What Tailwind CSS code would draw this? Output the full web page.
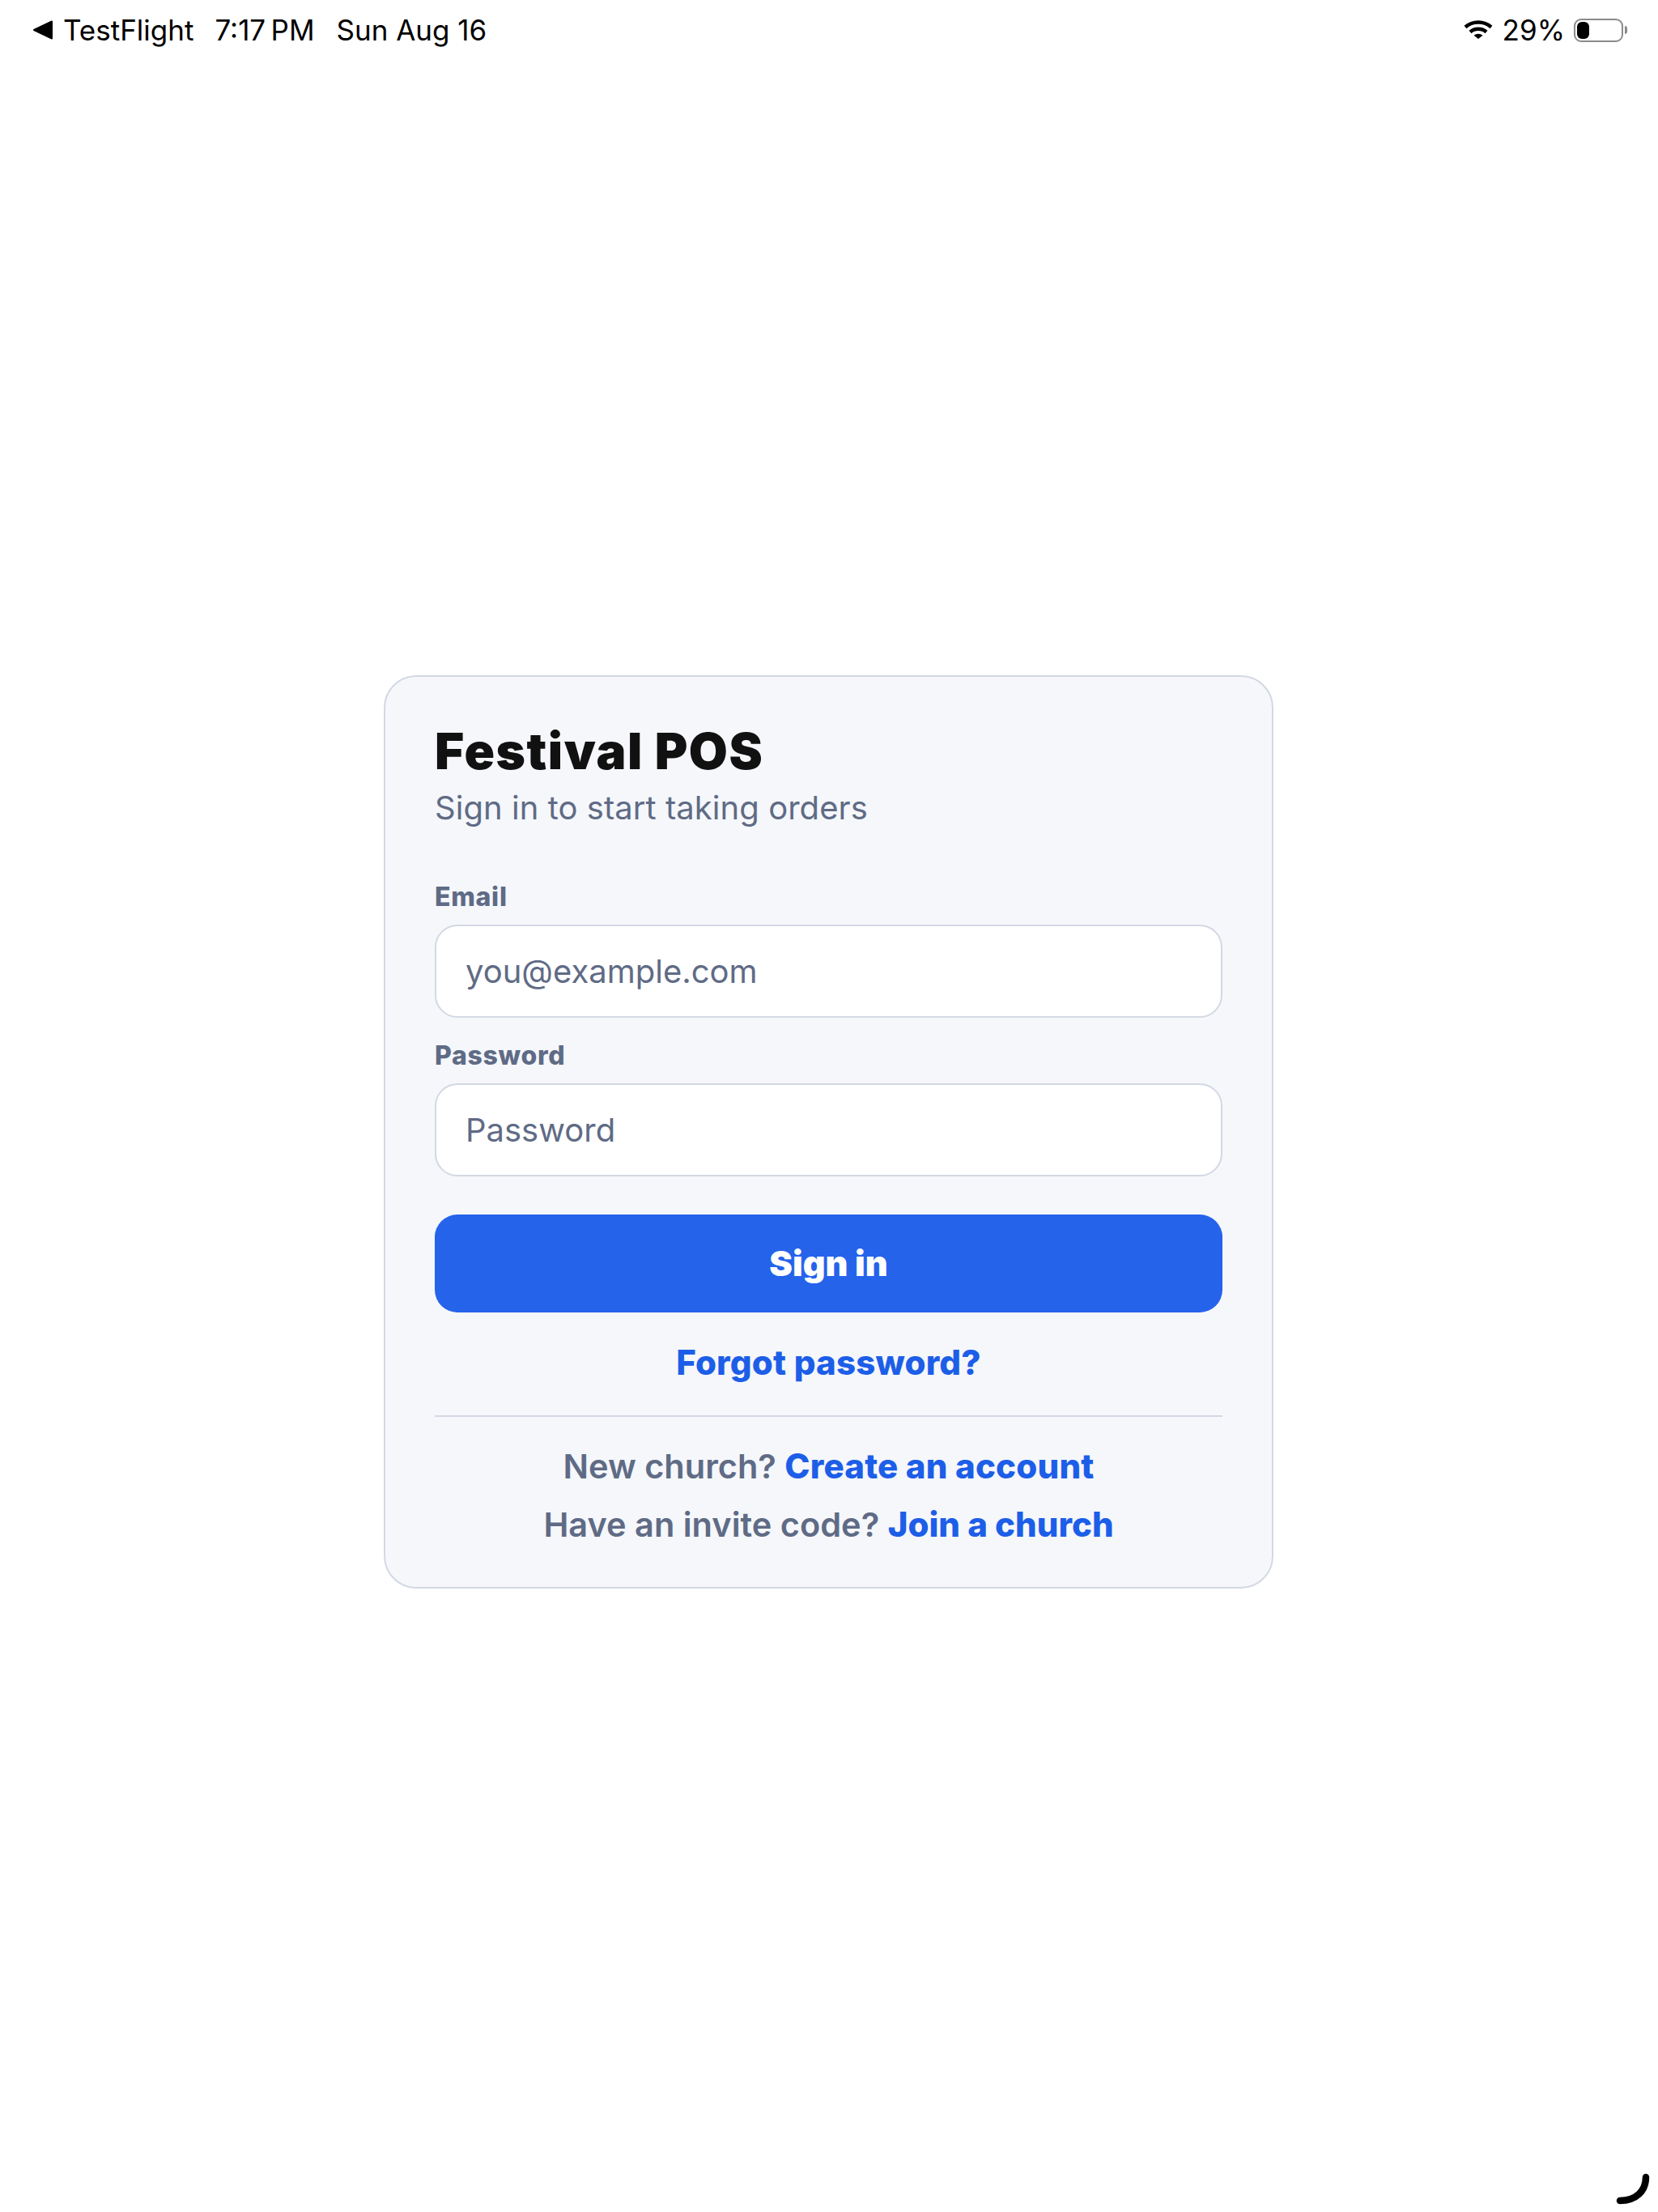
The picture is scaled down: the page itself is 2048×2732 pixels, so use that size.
<!DOCTYPE html>
<html lang="en">
<head>
  <meta charset="UTF-8">
  <title>Festival POS</title>
  <script src="https://cdn.jsdelivr.net/npm/@tailwindcss/browser@4"></script>
</head>
<body class="bg-white font-['Inter',sans-serif]">
  <div class="relative w-[2048px] h-[2732px] overflow-hidden">
    <!-- status bar -->
    <div class="flex items-center justify-between h-[74px] text-black text-[35px]">
      <div class="flex items-center pl-[41px]">
        <svg width="24" height="24" viewBox="0 0 24 24" class="mr-[13px]"><path d="M23 1.5 L23 22.5 L1 12 Z" fill="#000" stroke="#000" stroke-width="2" stroke-linejoin="round"/></svg>
        <span>TestFlight</span>
        <span class="ml-[26px]">7:17&#8201;PM</span>
        <span class="ml-[27px]">Sun Aug 16</span>
      </div>
      <div class="flex items-center pr-[38px]">
        <svg width="36" height="24" viewBox="0 0 36 24" fill="none" stroke="#000" stroke-width="4.4">
          <path d="M2 8.5 C11 0.5 25 0.5 34 8.5"/>
          <path d="M8 14.5 C13.5 9.5 22.5 9.5 28 14.5"/>
          <path d="M18 23 L12.5 18.8 C15.5 16 20.5 16 23.5 18.8 Z" fill="#000" stroke="none"/>
        </svg>
        <span class="ml-[12px]">29%</span>
        <div class="ml-[11px] flex items-center">
          <div class="w-[61px] h-[29px] rounded-[9px] border-[2px] border-[#8a8a8a] p-[2px]">
            <div class="w-[15px] h-full rounded-[6px] bg-black"></div>
          </div>
          <div class="ml-[2px] w-[3px] h-[10px] rounded-r-[3px] bg-[#8a8a8a]"></div>
        </div>
      </div>
    </div>

    <!-- login card -->
    <div class="w-[1099px] h-[1128px] ml-[474px] mt-[760px] px-[61px] pt-[57px] rounded-[40px] border-[2px] border-[#d3d8e3] bg-[#f5f7fb]">
      <h1 class="text-[62px] leading-[70px] font-black tracking-[1.5px] text-[#111111]">Festival POS</h1>
      <p class="mt-[10px] text-[40px] leading-[50px] tracking-[0.05px] text-[#5f6b85]">Sign in to start taking orders</p>

      <label class="block mt-[67px] text-[32px] leading-[36px] font-extrabold tracking-[0.7px] text-[#5f6b85]">Email</label>
      <input type="text" placeholder="you@example.com" class="block mt-[16px] w-full h-[115px] px-[36px] rounded-[28px] border-[2px] border-[#d3d8e3] bg-white text-[40px] placeholder:text-[#5f6b85]">

      <label class="block mt-[29px] text-[32px] leading-[36px] font-extrabold tracking-[0.7px] text-[#5f6b85]">Password</label>
      <input type="password" placeholder="Password" class="block mt-[16px] w-full h-[115px] px-[36px] rounded-[28px] border-[2px] border-[#d3d8e3] bg-white text-[40px] placeholder:text-[#5f6b85]">

      <button class="block mt-[47px] w-full h-[121px] rounded-[28px] bg-[#2563eb] text-white text-[43px] font-black">Sign in</button>

      <div class="mt-[37px] text-center text-[42px] leading-[50px] font-extrabold tracking-[0.2px] text-[#1d5ee8]">Forgot password?</div>

      <div class="mt-[40px] border-t-[2px] border-[#d3d8e3]"></div>

      <div class="mt-[36px] text-center text-[41.5px] leading-[50px] font-semibold text-[#5f6b85]">New church? <span class="text-[42px] font-extrabold tracking-[0.2px] text-[#1d5ee8]">Create an account</span></div>
      <div class="mt-[22px] text-center text-[41.5px] leading-[50px] font-semibold text-[#5f6b85]">Have an invite code? <span class="text-[42px] font-extrabold text-[#1d5ee8]">Join a church</span></div>
    </div>

    <!-- scribble in the corner -->
    <svg width="100" height="100" viewBox="0 0 100 100" fill="none" class="absolute left-[1948px] top-[2632px]">
      <path d="M85 57 C85 74 73 86 53 86" stroke="#000" stroke-width="8.5" stroke-linecap="round"/>
    </svg>
  </div>
</body>
</html>
